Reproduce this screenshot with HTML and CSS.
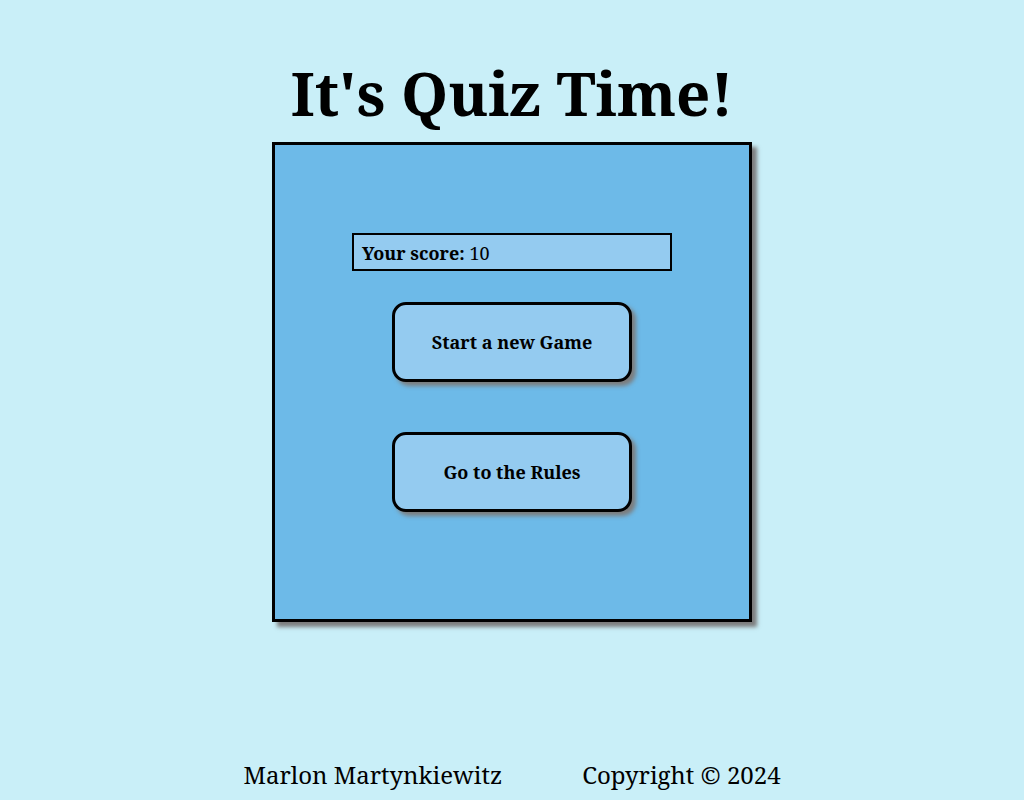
FILE: index.html
```html
<!DOCTYPE html>
<html lang="en">
<head>
<meta charset="utf-8">
<title>Quiz</title>
<link rel="stylesheet" href="styles.css">
</head>
<body>
<main class="page">
  <h1 class="title">It's Quiz Time!</h1>
  <section class="card">
    <div class="score"><strong>Your score:</strong> 10</div>
    <button class="btn">Start a new Game</button>
    <button class="btn">Go to the Rules</button>
  </section>
</main>
<footer class="footer">
  <span>Marlon Martynkiewitz</span>
  <span>Copyright © 2024</span>
</footer>
</body>
</html>
```
FILE: styles.css
```css
html, body {
  margin: 0;
  padding: 0;
}
body {
  background: #c9eff8;
  font-family: "Noto Serif", "DejaVu Serif", serif;
  color: #000;
  height: 800px;
  display: flex;
  flex-direction: column;
}
.page {
  flex: 1;
  display: flex;
  flex-direction: column;
  align-items: center;
}
.title {
  margin: 54px 0 0;
  font-size: 60px;
  font-weight: 700;
  line-height: 78px;
}
.card {
  margin-top: 10px;
  width: 474px;
  background: #6dbae8;
  border: 3px solid #000;
  box-shadow: 5px 5px 4px #7d7d7d;
  display: flex;
  flex-direction: column;
  align-items: center;
  padding-top: 88px;
  box-sizing: content-box;
  height: 386px;
}
.score {
  width: 308px;
  height: 34px;
  border: 2px solid #000;
  background: #94cbf0;
  font-size: 18px;
  line-height: 36px;
  padding-left: 8px;
  box-sizing: content-box;
}
.btn {
  font-family: inherit;
  margin-top: 31px;
  width: 240px;
  height: 80px;
  border: 3px solid #000;
  border-radius: 14px;
  background: #94cbf0;
  box-shadow: 4px 4px 4px #7d7d7d;
  font-size: 18px;
  font-weight: 700;
  color: #000;
  padding: 0;
}
.btn + .btn {
  margin-top: 50px;
}
.footer {
  display: flex;
  justify-content: center;
  gap: 80px;
  font-size: 24px;
  padding-bottom: 8px;
  line-height: 34px;
}
```
